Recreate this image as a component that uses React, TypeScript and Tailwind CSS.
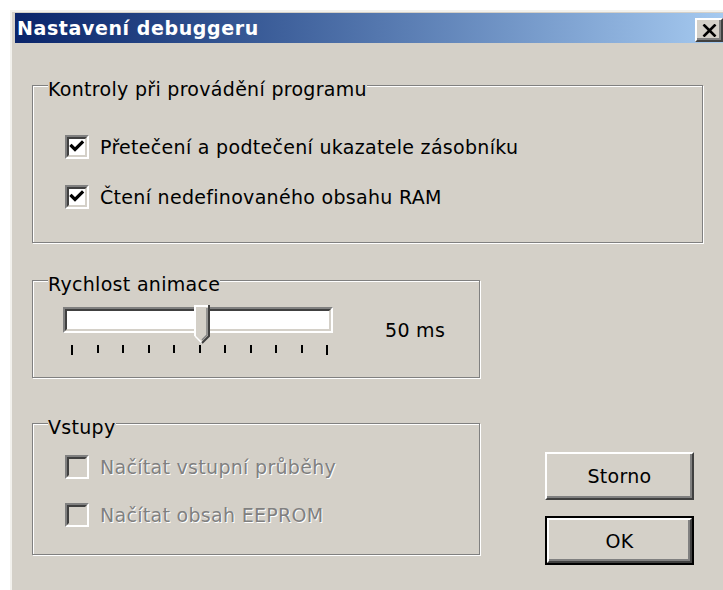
import type { ReactNode } from "react";

const face = "bg-[#d4d0c8]";

// classic raised 3D edge used by push buttons
const raised =
  "border-2 border-t-white border-l-white border-r-[#404040] border-b-[#404040] shadow-[inset_-2px_-2px_0_#808080]";

const CheckMark = () => (
  <svg width="16" height="16" viewBox="0 0 16 16">
    <polyline
      points="2.5,7 6,10.5 13,3.5"
      fill="none"
      stroke="#000"
      strokeWidth="3.2"
      strokeLinecap="square"
    />
  </svg>
);

const CheckBox = ({
  label,
  checked,
  disabled,
}: {
  label: string;
  checked?: boolean;
  disabled?: boolean;
}) => (
  <div className="flex items-center gap-[11px]">
    <span className="w-[24px] h-[24px] border-2 border-t-[#808080] border-l-[#808080] border-r-white border-b-white">
      <span
        className={`flex items-center justify-center w-full h-full border-2 border-t-[#404040] border-l-[#404040] border-r-[#d4d0c8] border-b-[#d4d0c8] ${
          disabled ? face : "bg-white"
        }`}
      >
        {checked && <CheckMark />}
      </span>
    </span>
    <span
      className={
        disabled ? "text-[#808080] [text-shadow:1px_1px_0_#fff]" : "text-black"
      }
    >
      {label}
    </span>
  </div>
);

const Group = ({
  title,
  className,
  children,
}: {
  title: string;
  className: string;
  children: ReactNode;
}) => (
  <div
    className={`flex flex-col border border-[#808080] shadow-[1px_1px_0_#fff,inset_1px_1px_0_#fff] ${className}`}
  >
    <span className={`-mt-[8px] ml-[15px] self-start ${face} leading-[22px]`}>
      {title}
    </span>
    {children}
  </div>
);

const Slider = () => {
  const ticks = Array.from({ length: 11 }, (_, i) => i);
  return (
    <div className="flex flex-col">
      <div className="relative w-[270px] h-[26px] border-2 border-t-[#808080] border-l-[#808080] border-r-white border-b-white">
        <div className="w-full h-full bg-white border-2 border-t-[#404040] border-l-[#404040] border-r-[#d4d0c8] border-b-[#d4d0c8]" />
        <svg
          className="absolute left-[129px] -top-[4px]"
          width="16"
          height="40"
          viewBox="0 0 16 40"
        >
          <polygon points="0,0 16,0 16,31 8,39 0,31" fill="#d4d0c8" />
          <polyline points="1,31 1,1 15,1" fill="none" stroke="#fff" strokeWidth="2" />
          <polyline points="1,31 8,38" fill="none" stroke="#fff" strokeWidth="1.5" />
          <polyline points="15,0 15,31 8,38" fill="none" stroke="#404040" strokeWidth="2" />
          <polyline points="13,3 13,30 8,35" fill="none" stroke="#808080" strokeWidth="1.5" />
        </svg>
      </div>
      <div className="flex justify-between items-start w-[257px] ml-[8px] mt-[12px]">
        {ticks.map((i) => (
          <span
            key={i}
            className={`w-[2px] bg-black ${i === 0 || i === 10 ? "h-[10px]" : "h-[8px]"}`}
          />
        ))}
      </div>
    </div>
  );
};

export default function App() {
  return (
    <div className="w-[723px] h-[590px] overflow-hidden bg-white pl-[10px] pt-[10px] font-['DejaVu_Sans',sans-serif] text-[19px] leading-[22px] tracking-[0.3px]">
      <div className={`w-[718px] h-[600px] flex flex-col ${face} border-l-2 border-t-2 border-[#f2f1ed] pl-[3px] pr-[3px] pt-[1px]`}>
        <div className="h-[30px] flex items-start bg-gradient-to-r from-[#0a246a] to-[#a6caf0]">
          <span className="mt-[4px] ml-[2px] font-bold text-white tracking-[0.6px]">
            Nastavení debuggeru
          </span>
          <button
            className={`ml-auto mr-[2px] mt-[5px] w-[28px] h-[24px] ${face} ${raised} flex items-center justify-center`}
          >
            <svg width="15" height="13" viewBox="0 0 15 13">
              <path d="M1.5 0.5 L13.5 12.5 M13.5 0.5 L1.5 12.5" stroke="#000" strokeWidth="2.6" />
            </svg>
          </button>
        </div>

        <div className="flex flex-col pl-[17px] pt-[42px]">
          <Group title="Kontroly při provádění programu" className="w-[671px] h-[158px]">
            <div className="flex flex-col gap-[26px] pl-[32px] mt-[35px]">
              <CheckBox checked label="Přetečení a podtečení ukazatele zásobníku" />
              <CheckBox checked label="Čtení nedefinovaného obsahu RAM" />
            </div>
          </Group>

          <Group title="Rychlost animace" className="w-[448px] h-[98px] mt-[37px]">
            <div className="flex items-start pl-[30px] mt-[12px]">
              <Slider />
              <span className="ml-[52px] mt-[12px]">50 ms</span>
            </div>
          </Group>

          <div className="flex items-start mt-[45px]">
            <Group title="Vstupy" className="w-[448px] h-[132px]">
              <div className="flex flex-col gap-[24px] pl-[32px] mt-[17px]">
                <CheckBox disabled label="Načítat vstupní průběhy" />
                <CheckBox disabled label="Načítat obsah EEPROM" />
              </div>
            </Group>

            <div className="flex flex-col gap-[16px] ml-[65px] pt-[29px]">
              <button className={`w-[149px] h-[48px] ${face} ${raised}`}>Storno</button>
              <button className="w-[149px] h-[49px] border-2 border-black">
                <span className={`flex items-center justify-center w-full h-full ${face} ${raised}`}>
                  OK
                </span>
              </button>
            </div>
          </div>
        </div>
      </div>
    </div>
  );
}
